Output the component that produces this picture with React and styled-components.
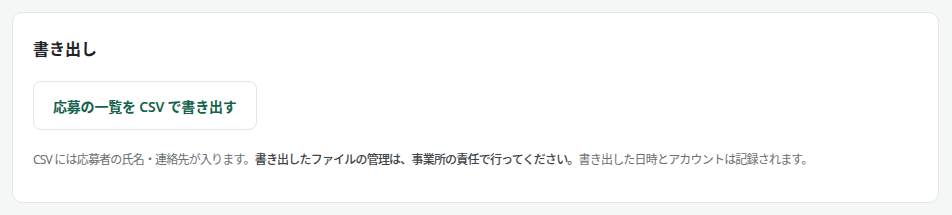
import React from 'react';
import styled, { createGlobalStyle } from 'styled-components';

const GlobalStyle = createGlobalStyle`
  html, body {
    margin: 0;
    padding: 0;
    background: #f5f6f6;
  }
  body {
    font-family: "Noto Sans", "Noto Sans CJK JP", sans-serif;
    color: #1f2328;
  }
`;

const Page = styled.div`
  padding: 12px 13px 12px 12px;
`;

const Card = styled.section`
  background: #ffffff;
  border: 1px solid #e3e5e6;
  border-radius: 10px;
  padding: 24px 20px 33px 20px;
  display: flex;
  flex-direction: column;
  align-items: flex-start;
`;

const Heading = styled.h2`
  margin: 0;
  font-size: 16px;
  font-weight: 600;
  line-height: 24px;
  color: #1f2328;
`;

const ExportButton = styled.button`
  margin-top: 20px;
  height: 49px;
  padding: 0 19px;
  background: #ffffff;
  border: 1px solid #e3e5e6;
  border-radius: 8px;
  font-family: inherit;
  font-size: 14px;
  font-weight: 600;
  letter-spacing: -0.2px;
  color: #13624b;
  cursor: pointer;
`;

const Note = styled.p`
  margin: 21px 0 0;
  font-size: 12px;
  line-height: 18px;
  letter-spacing: -0.8px;
  color: #6a6f73;
`;

const Strong = styled.span`
  font-weight: 500;
  color: #3f4448;
`;

export default function App() {
  return (
    <>
      <GlobalStyle />
      <Page>
        <Card>
          <Heading>書き出し</Heading>
          <ExportButton type="button">応募の一覧を CSV で書き出す</ExportButton>
          <Note>
            CSV には応募者の氏名・連絡先が入ります。
            <Strong>書き出したファイルの管理は、事業所の責任で行ってください。</Strong>
            書き出した日時とアカウントは記録されます。
          </Note>
        </Card>
      </Page>
    </>
  );
}
